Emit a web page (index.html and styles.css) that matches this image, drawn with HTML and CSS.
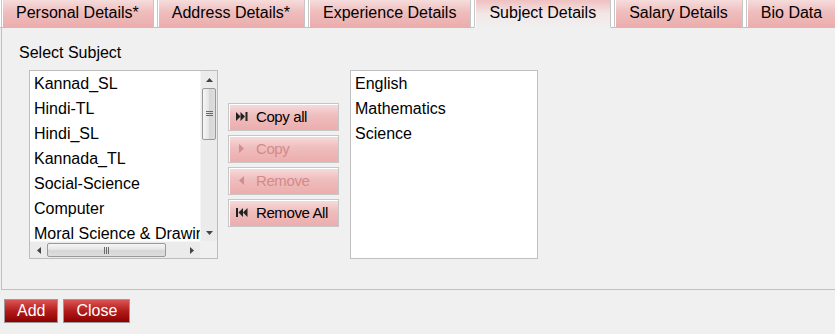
FILE: index.html
```html
<!DOCTYPE html>
<html lang="en">
<head>
    <meta charset="UTF-8">
    <meta name="viewport" content="width=device-width, initial-scale=1.0">
    <title>Teacher Details - Subject</title>
    <link rel="stylesheet" href="styles.css">
</head>

<body>
    <div class="tabs">
        <div class="tab">Personal Details*</div>
        <div class="tab">Address Details*</div>
        <div class="tab">Experience Details</div>
        <div class="tab active">Subject Details</div>
        <div class="tab">Salary Details</div>
        <div class="tab">Bio Data</div>
    </div>

    <div class="panel">
        <div class="field-label">Select Subject</div>

        <div class="picker">
            <!-- available subjects -->
            <div class="listbox">
                <div class="lb-items">
                    <div class="lb-item">Kannad_SL</div>
                    <div class="lb-item">Hindi-TL</div>
                    <div class="lb-item">Hindi_SL</div>
                    <div class="lb-item">Kannada_TL</div>
                    <div class="lb-item">Social-Science</div>
                    <div class="lb-item">Computer</div>
                    <div class="lb-item">Moral Science &amp; Drawing</div>
                </div>
                <div class="vscroll">
                    <div class="sb-arrow">
                        <svg width="7" height="4" viewBox="0 0 7 4"><polygon points="0,4 3.5,0 7,4" fill="#444"/></svg>
                    </div>
                    <div class="vthumb">
                        <svg width="7" height="6" viewBox="0 0 7 6"><path d="M0 0.5h7M0 2.5h7M0 4.5h7" stroke="#6a6a6a" stroke-width="1"/></svg>
                    </div>
                    <div class="sb-track"></div>
                    <div class="sb-arrow">
                        <svg width="7" height="4" viewBox="0 0 7 4"><polygon points="0,0 3.5,4 7,0" fill="#444"/></svg>
                    </div>
                </div>
                <div class="hscroll">
                    <div class="sb-arrow">
                        <svg width="4" height="7" viewBox="0 0 4 7"><polygon points="4,0 0,3.5 4,7" fill="#444"/></svg>
                    </div>
                    <div class="hthumb">
                        <svg width="6" height="7" viewBox="0 0 6 7"><path d="M0.5 0v7M2.5 0v7M4.5 0v7" stroke="#6a6a6a" stroke-width="1"/></svg>
                    </div>
                    <div class="sb-track"></div>
                    <div class="sb-arrow">
                        <svg width="4" height="7" viewBox="0 0 4 7"><polygon points="0,0 4,3.5 0,7" fill="#444"/></svg>
                    </div>
                </div>
                <div class="sb-corner"></div>
            </div>

            <div class="move-btns">
                <button class="move-btn">
                    <svg class="ico" width="12" height="9" viewBox="0 0 12 9"><polygon points="0,0 4.5,4.5 0,9" /><polygon points="4.5,0 9,4.5 4.5,9" /><rect x="9.5" y="0" width="2" height="9" /></svg>
                    Copy all
                </button>
                <button class="move-btn disabled">
                    <svg class="ico" width="12" height="9" viewBox="0 0 12 9"><polygon points="3,0 8,4.5 3,9" /></svg>
                    Copy
                </button>
                <button class="move-btn disabled">
                    <svg class="ico" width="12" height="9" viewBox="0 0 12 9"><polygon points="8,0 3,4.5 8,9" /></svg>
                    Remove
                </button>
                <button class="move-btn">
                    <svg class="ico" width="12" height="9" viewBox="0 0 12 9"><rect x="0" y="0" width="2" height="9" /><polygon points="7,0 2.5,4.5 7,9" /><polygon points="11.5,0 7,4.5 11.5,9" /></svg>
                    Remove All
                </button>
            </div>

            <!-- selected subjects -->
            <div class="selected-box">
                <div class="lb-item">English</div>
                <div class="lb-item">Mathematics</div>
                <div class="lb-item">Science</div>
            </div>
        </div>
    </div>

    <div class="actions">
        <button class="red-btn">Add</button>
        <button class="red-btn">Close</button>
    </div>
</body>
</html>
```

FILE: styles.css
```css
body {
    font-family: "Liberation Sans", Arial, sans-serif;
    font-size: 16px;
    background-color: #f0f0f0;
    color: #000;
    margin: 0;
    width: 835px;
    height: 334px;
    overflow: hidden;
}
.tabs {
    display: flex;
    align-items: flex-end;
    padding-left: 1px;
    width: 900px;
    background: linear-gradient(to top, #c0c0c0 1px, #ffffff 1px);
}
.tab {
    height: 27px;
    line-height: 26px;
    padding: 0 14px;
    margin-right: 3px;
    white-space: nowrap;
    border: 1px solid #c6c6c6;
    border-top: none;
    border-bottom-color: #c0c0c0;
    box-shadow: inset 1px 0 0 #ffffff;
    background: linear-gradient(#f6dcdc, #efbdbd 45%, #ecadad);
}
.tab.active {
    border-bottom-color: #f0f0f0;
    background: linear-gradient(#efc0c0, #f3e6e6 50%, #f0f0f0);
}
.panel {
    background-color: #f0f0f0;
    border-left: 1px solid #c0c0c0;
    border-bottom: 1px solid #c0c0c0;
    margin-left: 1px;
    height: 245px;
    padding: 16px 0 0 17px;
}
.field-label {
    line-height: 18px;
    margin-bottom: 8px;
}
.picker {
    display: flex;
    align-items: flex-start;
    margin-left: 10px;
}
.listbox {
    width: 187px;
    height: 187px;
    border: 1px solid #bdbdbd;
    background: white;
    display: grid;
    grid-template-columns: 1fr 17px;
    grid-template-rows: 1fr 17px;
}
.lb-items {
    overflow: hidden;
}
.lb-item {
    line-height: 25px;
    padding-left: 4px;
    white-space: nowrap;
}
.vscroll {
    display: flex;
    flex-direction: column;
    background: #ebebeb;
    border-left: 1px solid #f5f5f5;
}
.hscroll {
    display: flex;
    background: #ebebeb;
    border-top: 1px solid #f5f5f5;
}
.sb-arrow {
    flex: 0 0 17px;
    display: flex;
    align-items: center;
    justify-content: center;
}
.sb-track {
    flex: 1;
}
.vthumb {
    height: 50px;
    margin: 0 1px;
    border: 1px solid #999;
    border-radius: 2px;
    background: linear-gradient(to right, #f6f6f6, #e6e6e6 45%, #d6d6d6 55%, #dedede);
    display: flex;
    align-items: center;
    justify-content: center;
}
.hthumb {
    width: 117px;
    margin: 1px 0;
    border: 1px solid #999;
    border-radius: 2px;
    background: linear-gradient(#f6f6f6, #e6e6e6 45%, #d6d6d6 55%, #dedede);
    display: flex;
    align-items: center;
    justify-content: center;
}
.sb-corner {
    background: #f0f0f0;
}
.move-btns {
    display: flex;
    flex-direction: column;
    gap: 4px;
    margin: 33px 0 0 10px;
}
.move-btn {
    width: 111px;
    height: 28px;
    display: flex;
    align-items: center;
    gap: 8px;
    padding: 0 0 2px 7px;
    font-family: "Liberation Sans", Arial, sans-serif;
    font-size: 15px;
    letter-spacing: -0.4px;
    color: #000;
    border: 1px solid #c6c6c6;
    box-shadow: inset 1px 1px 0 #ffffff;
    background: linear-gradient(#f6dcdc, #efbdbd 45%, #ecadad);
    cursor: pointer;
}
.move-btn .ico {
    flex-shrink: 0;
    fill: #222;
}
.move-btn.disabled {
    color: #d48a8a;
    cursor: default;
}
.move-btn.disabled .ico {
    fill: #d28e8e;
}
.selected-box {
    width: 186px;
    height: 187px;
    margin-left: 11px;
    border: 1px solid #c0c0c0;
    background: white;
}
.actions {
    display: flex;
    gap: 5px;
    padding: 9px 0 0 4px;
}
.red-btn {
    height: 24px;
    padding: 0 12px;
    font-family: "Liberation Sans", Arial, sans-serif;
    font-size: 16px;
    color: white;
    border: 1px solid #9a9a9a;
    background: linear-gradient(#dc5454, #b21c1c 50%, #8e0000);
    cursor: pointer;
}
```
